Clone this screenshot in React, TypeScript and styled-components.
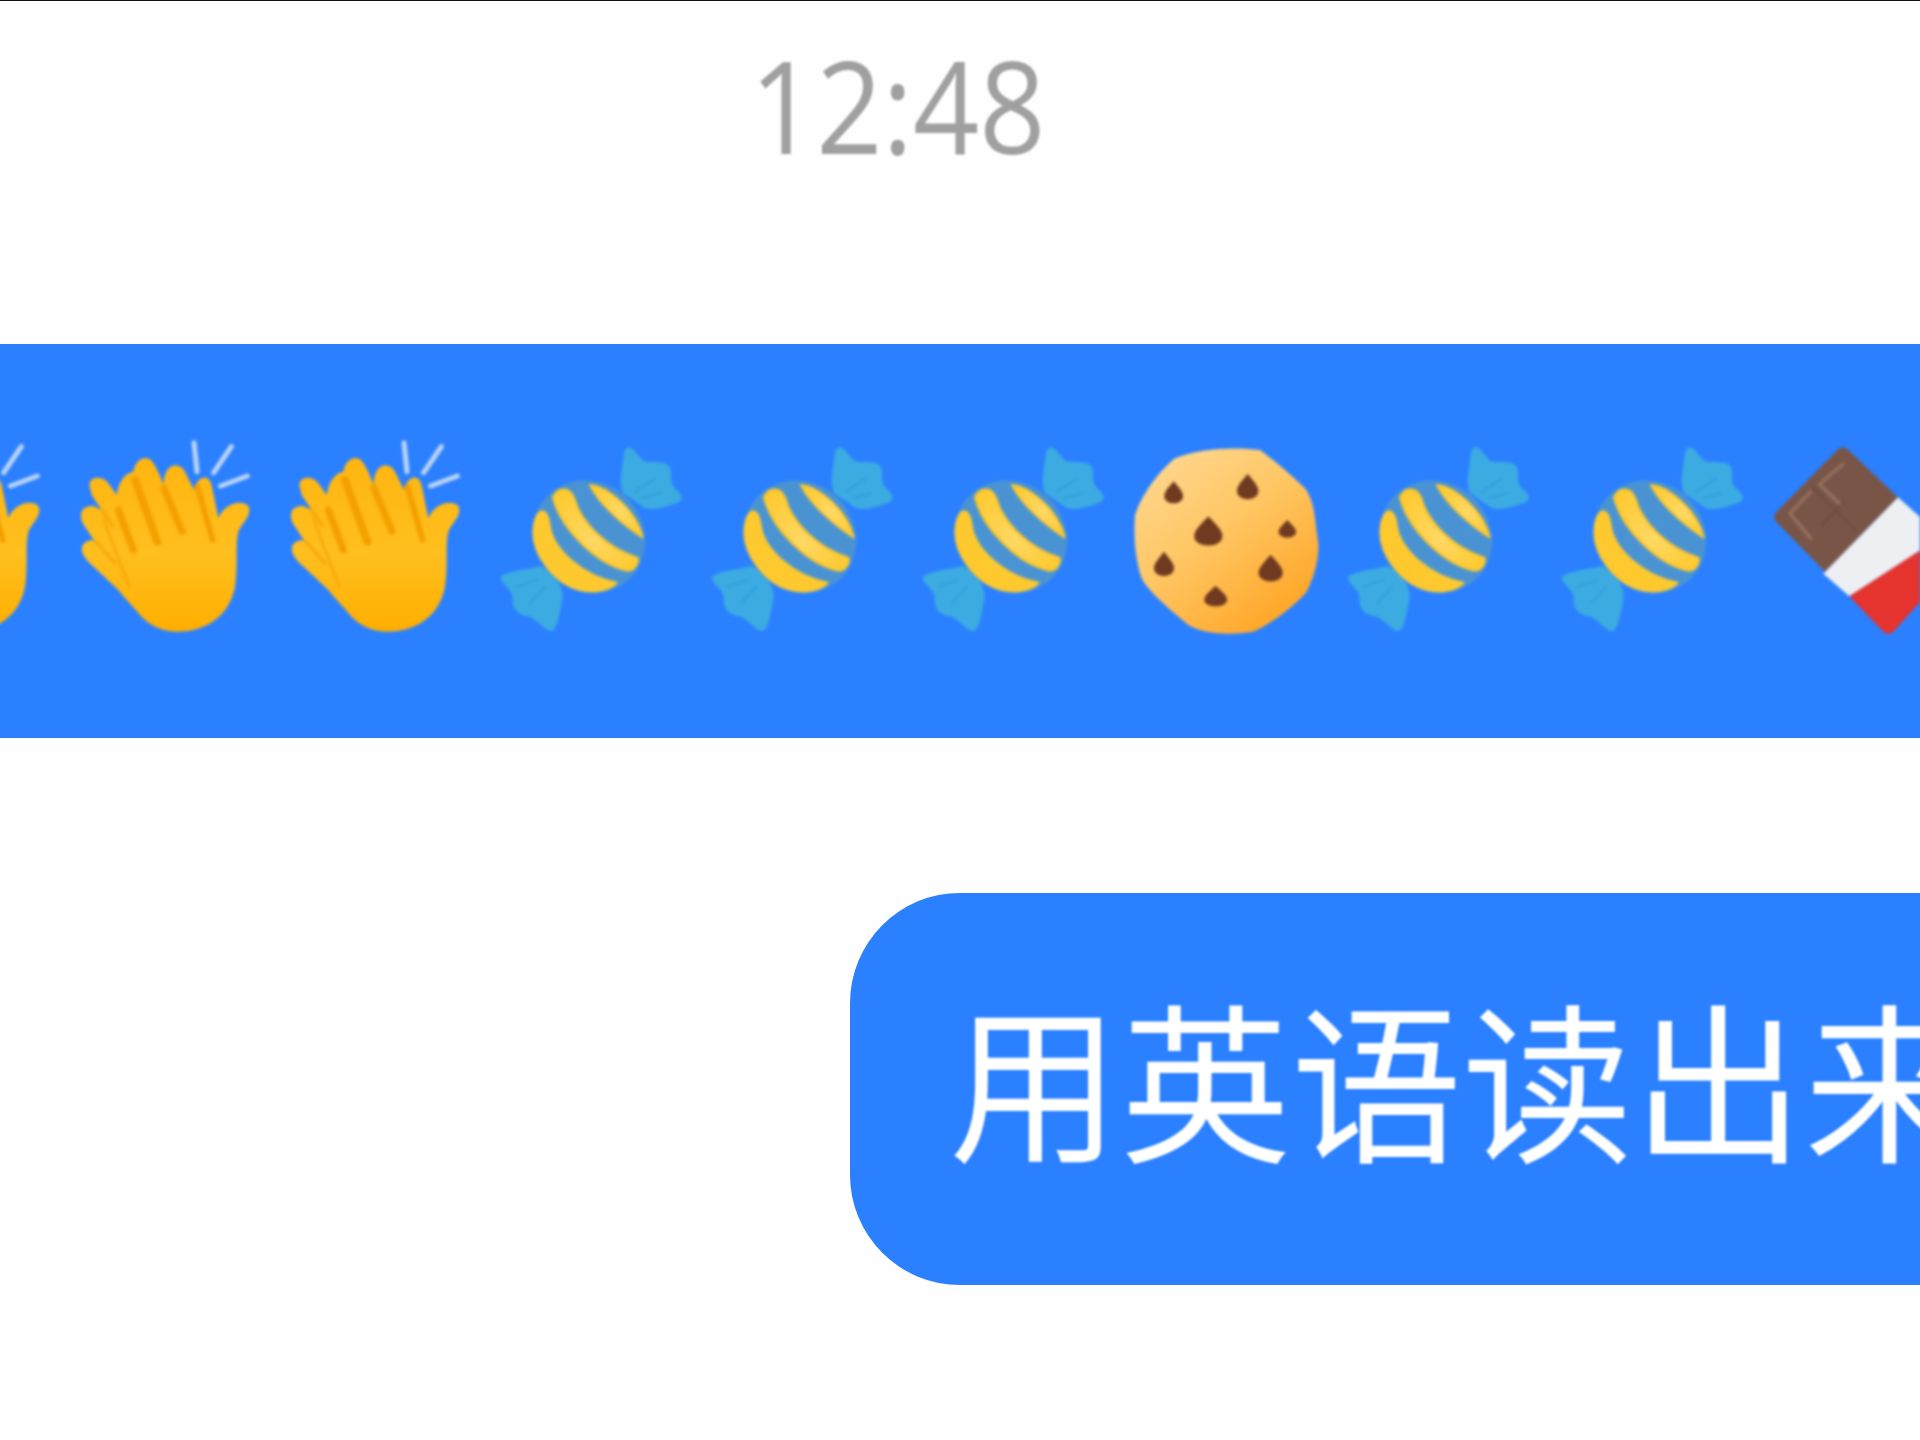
import React from "react";
import styled, { createGlobalStyle } from "styled-components";

const Global = createGlobalStyle`
  html, body { margin: 0; padding: 0; background: #fefefe; overflow: hidden; }
  #root { width: 1920px; height: 1440px; overflow: hidden; }
`;

const Page = styled.main`
  width: 1920px;
  height: 1440px;
  display: flex;
  flex-direction: column;
  background: #fefefe;
  border-top: 1px solid #111;
  box-sizing: border-box;
  overflow: hidden;
`;

const TimeRow = styled.div`
  height: 343px;
  padding-left: 750px;
  padding-top: 15px;
  box-sizing: border-box;
  flex-shrink: 0;
`;

const Time = styled.span`
  display: inline-block;
  font-family: "Open Sans", "Noto Sans", sans-serif;
  font-size: 128px;
  line-height: 178px;
  color: #a0a0a0;
  transform: scaleX(0.905);
  transform-origin: left center;
  filter: blur(1px);
`;

const Band = styled.section`
  height: 394px;
  background: #2b80ff;
  flex-shrink: 0;
  padding-top: 86px;
  box-sizing: border-box;
  overflow: hidden;
`;

const EmojiRow = styled.div`
  display: flex;
  align-items: flex-start;
  margin-left: -140px;
  filter: blur(1.4px);
`;

const Glyph = styled.svg<{ $gap?: number }>`
  flex-shrink: 0;
  height: 215px;
  margin-left: ${(p) => p.$gap ?? 0}px;
  display: block;
`;

const Clap = ({ gap }: { gap?: number }) => (
  <Glyph $gap={gap} width={190} viewBox="0 0 570 645">
    <defs>
      <linearGradient id="palm" x1="0" y1="0" x2="0" y2="1">
        <stop offset="0" stopColor="#ffb50f" />
        <stop offset="0.55" stopColor="#ffbf1e" />
        <stop offset="1" stopColor="#ffae00" />
      </linearGradient>
    </defs>
    <g fill="none" strokeLinecap="round" stroke="#bcd4f4" strokeWidth="15">
      <path d="M372 38 L381 125" />
      <path d="M484 50 L431 128" />
      <path d="M532 138 L452 168" />
    </g>
    <path
      d="M58 165 C60 140 95 135 115 160 L140 195 C148 150 165 130 190 125 C195 90 225 72 245 92 C262 115 272 140 280 165 C282 100 325 92 345 125 L372 180 C385 135 415 132 425 165 L445 265 C460 225 510 205 535 228 C548 255 515 280 505 305 C495 345 505 400 495 470 C480 550 420 596 345 604 C295 610 245 595 210 555 C190 530 160 500 145 480 L55 395 C25 365 30 335 65 330 L75 335 L45 290 C20 255 35 225 70 228 L95 240 L65 195 Z"
      fill="url(#palm)"
    />
    <g fill="none" strokeLinecap="round" stroke="#f3a000">
      <path d="M145 240 L190 360" strokeWidth="22" />
      <path d="M195 150 L262 335" strokeWidth="24" />
      <path d="M282 175 L336 304" strokeWidth="22" />
      <path d="M382 170 L428 330" strokeWidth="18" />
      <path d="M100 265 L150 400 L178 470" strokeWidth="8" stroke="#f7a90a" />
      <path d="M78 335 L135 400" strokeWidth="10" stroke="#f7a90a" />
      <path d="M95 240 L130 290" strokeWidth="10" stroke="#f7a90a" />
    </g>
  </Glyph>
);

const Candy = ({ gap }: { gap?: number }) => (
  <Glyph $gap={gap} width={205} viewBox="0 0 615 645">
    <defs>
      <linearGradient id="stripe" x1="0" y1="0" x2="1" y2="1">
        <stop offset="0" stopColor="#fdc82a" />
        <stop offset="0.55" stopColor="#ffd863" />
        <stop offset="1" stopColor="#fdc82a" />
      </linearGradient>
    </defs>
    <g fill="#3cabe2">
      <path d="M418 52 C432 55 445 80 462 94 C485 100 530 90 540 112 C548 135 535 155 556 176 C585 200 580 215 550 222 C520 232 490 242 465 235 L400 190 C385 165 395 120 400 85 C402 65 405 52 418 52 Z" />
      <path d="M150 408 C110 420 60 420 32 440 C30 462 65 475 68 500 C65 540 85 555 120 560 C150 575 170 610 188 602 C205 590 210 540 217 510 C222 480 205 450 180 425 Z" />
    </g>
    <g fill="none" stroke="#2f9ad6" strokeWidth="6" strokeLinecap="round" opacity="0.7">
      <path d="M435 185 L495 145" />
      <path d="M455 205 L510 190" />
      <path d="M165 470 L120 520" />
      <path d="M140 450 L80 470" />
    </g>
    <ellipse cx="297" cy="320" rx="175" ry="162" transform="rotate(45 297 320)" fill="#4a93d2" />
    <path d="M300 165 C352 170 438 240 458 322 C400 285 330 225 300 165 Z" fill="url(#stripe)" stroke="#fdc82a" strokeWidth="6" strokeLinejoin="round" />
    <path d="M190 202 C205 170 240 172 252 206 C270 272 340 350 442 385 C445 402 430 425 408 420 C320 400 215 300 190 202 Z" fill="url(#stripe)" stroke="#fdc82a" strokeWidth="8" strokeLinejoin="round" />
    <path d="M150 245 C170 240 176 262 180 292 C192 360 280 440 380 458 C360 482 310 490 270 480 C190 460 130 370 130 310 C130 280 136 258 150 245 Z" fill="#fdc92e" stroke="#fdc92e" strokeWidth="6" strokeLinejoin="round" />
  </Glyph>
);

const chips: [number, number, number, number][] = [
  [146, 175, 28, 36],
  [368, 158, 32, 42],
  [250, 292, 42, 48],
  [487, 284, 26, 29],
  [117, 390, 30, 40],
  [437, 403, 36, 44],
  [272, 486, 34, 34],
];

const Cookie = ({ gap }: { gap?: number }) => (
  <Glyph $gap={gap} width={200} viewBox="0 -15 600 645">
    <defs>
      <linearGradient id="dough" x1="0.15" y1="0.1" x2="0.8" y2="0.95">
        <stop offset="0" stopColor="#ffd58a" />
        <stop offset="0.45" stopColor="#ffc561" />
        <stop offset="1" stopColor="#ffa525" />
      </linearGradient>
    </defs>
    <path
      d="M150 70 C220 40 330 35 405 45 C440 70 500 120 540 160 C570 200 570 260 578 310 C585 350 575 410 545 470 C510 510 450 560 385 590 C320 600 240 600 190 570 C130 520 70 470 50 430 C30 370 25 300 30 240 C50 180 100 110 150 70 Z"
      fill="url(#dough)"
    />
    {chips.map(([x, y, rx, ry], i) => (
      <path
        key={i}
        d={`M${x} ${y - ry} C${x + rx * 0.4} ${y - ry * 0.6} ${x + rx * 1.1} ${y - ry * 0.1} ${x + rx} ${y + ry * 0.3} C${x + rx * 0.9} ${y + ry} ${x - rx * 0.9} ${y + ry} ${x - rx} ${y + ry * 0.3} C${x - rx * 1.1} ${y - ry * 0.1} ${x - rx * 0.4} ${y - ry * 0.6} ${x} ${y - ry} Z`}
        fill="#6f3a20"
      />
    ))}
  </Glyph>
);

const Chocolate = ({ gap }: { gap?: number }) => (
  <Glyph $gap={gap} width={160} viewBox="0 -15 480 645">
    <path
      d="M232 45 C240 35 255 35 265 45 L414 187 L195 410 L50 262 C40 250 40 240 50 230 Z"
      fill="#795548"
    />
    <g fill="none" stroke="#94705f" strokeWidth="10" strokeLinecap="round" strokeLinejoin="round">
      <path d="M248 88 L178 148 L245 212" />
      <path d="M152 170 L90 235 L152 310" />
    </g>
    <g fill="none" stroke="#6f4d41" strokeWidth="8" strokeLinecap="round">
      <path d="M160 160 L290 290" />
      <path d="M255 200 L185 270" />
    </g>
    <path d="M414 187 L490 255 L490 340 L268 484 L190 416 Z" fill="#eeeff2" />
    <path d="M490 340 L490 490 L400 590 C390 598 380 598 370 590 L268 484 Z" fill="#e5332e" />
  </Glyph>
);

const BubbleRow = styled.div`
  margin-top: 155px;
  display: flex;
`;

const Bubble = styled.div`
  margin-left: 850px;
  width: 1070px;
  height: 392px;
  flex-shrink: 0;
  background: #2b80ff;
  border-radius: 110px 0 0 110px;
  display: flex;
  align-items: center;
  padding: 0 0 30px 99px;
  box-sizing: border-box;
  overflow: hidden;
`;

const BubbleText = styled.span`
  font-family: "Noto Sans CJK SC", "Noto Sans", sans-serif;
  font-size: 171px;
  line-height: 1;
  color: #fff;
  white-space: nowrap;
  filter: blur(0.9px);
`;

export default function App() {
  return (
    <>
      <Global />
      <Page>
        <TimeRow>
          <Time>12:48</Time>
        </TimeRow>
        <Band>
          <EmojiRow>
            <Clap />
            <Clap gap={20} />
            <Clap gap={20} />
            <Candy gap={20} />
            <Candy gap={6} />
            <Candy gap={6} />
            <Cookie gap={8} />
            <Candy gap={12} />
            <Candy gap={9} />
            <Chocolate gap={4} />
          </EmojiRow>
        </Band>
        <BubbleRow>
          <Bubble>
            <BubbleText>用英语读出来</BubbleText>
          </Bubble>
        </BubbleRow>
      </Page>
    </>
  );
}
